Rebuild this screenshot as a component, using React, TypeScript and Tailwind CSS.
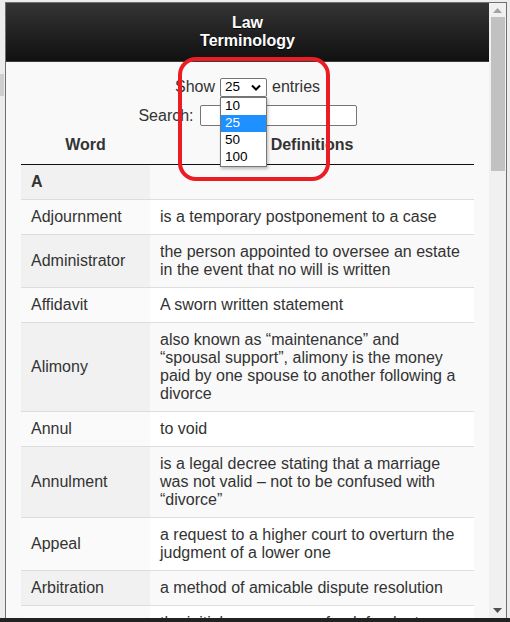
// Law terminology glossary: dark title bar, DataTables-style controls and a striped word list.
const terms: [string, string][] = [
  ["A", ""],
  ["Adjournment", "is a temporary postponement to a case"],
  ["Administrator", "the person appointed to oversee an estate in the event that no will is written"],
  ["Affidavit", "A sworn written statement"],
  [
    "Alimony",
    "also known as “maintenance” and “spousal support”, alimony is the money paid by one spouse to another following a divorce",
  ],
  ["Annul", "to void"],
  ["Annulment", "is a legal decree stating that a marriage was not valid – not to be confused with “divorce”"],
  ["Appeal", "a request to a higher court to overturn the judgment of a lower one"],
  ["Arbitration", "a method of amicable dispute resolution"],
  ["Arraignment", "the initial appearance of a defendant before a judge in a criminal case"],
];

export default function App() {
  return (
    <div
      className="relative flex h-[622px] w-[510px] flex-col overflow-hidden bg-[#ececec] text-[#333]"
      style={{ fontFamily: '"Liberation Sans", Arial, sans-serif' }}
    >
      <div className="flex min-h-0 flex-1 pt-[2px]">
        {/* left window edge */}
        <div className="flex w-[5px] flex-col">
          <div className="mt-[72px] h-[22px] w-[4px] bg-[#cfcfcf]" />
        </div>
        <div className="flex min-h-0 flex-1 border-l border-t border-r border-[#6f6f6f]">
          <main className="flex min-w-0 flex-1 flex-col overflow-hidden bg-[#f9f9f9]">
            <header className="border-b border-[#3a3a3a] bg-gradient-to-b from-[#353535] to-[#111] pt-[11px] pb-[11px] text-center text-[16px] font-bold leading-[18px] text-white [text-shadow:0_1px_0_#000]">
              Law
              <br />
              Terminology
            </header>

            <div className="px-[15px] pt-[15px]">
              <div className="flex h-[20px] items-center justify-center text-[16px]">
                <span>Show</span>
                <div className="relative mx-[5px]">
                  <div className="flex h-[19px] w-[47px] items-center justify-between rounded-[2px] border border-[#767676] bg-white pl-[4px] pr-[5px] text-[13.5px] text-black">
                    <span>25</span>
                    <svg width="10" height="7" viewBox="0 0 10 7">
                      <path d="M1 1.5 L5 5.5 L9 1.5" fill="none" stroke="#000" strokeWidth="2" />
                    </svg>
                  </div>
                  {/* open options list */}
                  <ul className="absolute left-0 top-[19px] z-10 w-[47px] border border-[#767676] bg-white text-[13.5px] text-black shadow-[1px_2px_3px_rgba(0,0,0,0.25)]">
                    {["10", "25", "50", "100"].map((o) => (
                      <li
                        key={o}
                        className={
                          o === "25"
                            ? "flex h-[17px] items-center bg-[#1e90ff] pl-[4px] text-white"
                            : "flex h-[17px] items-center pl-[4px]"
                        }
                      >
                        {o}
                      </li>
                    ))}
                  </ul>
                </div>
                <span>entries</span>
              </div>

              <div className="mt-[7px] flex h-[23px] items-center justify-center text-[16px]">
                <span>Search:</span>
                <div className="ml-[6px] h-[21px] w-[157px] rounded-[2px] border border-[#767676] bg-white" />
              </div>

              <table className="w-[453px] table-fixed border-collapse text-[16px] leading-[18px]">
                <colgroup>
                  <col className="w-[129px]" />
                  <col />
                </colgroup>
                <thead>
                  <tr className="border-b border-[#111]">
                    <th className="px-[10px] pt-[9px] pb-[10px] text-center font-bold">Word</th>
                    <th className="px-[10px] pt-[9px] pb-[10px] text-center font-bold">Definitions</th>
                  </tr>
                </thead>
                <tbody>
                  {terms.map(([word, def], i) => {
                    const odd = i % 2 === 0;
                    return (
                      <tr key={word} className={i > 0 ? "border-t border-[#ddd]" : ""}>
                        <td
                          className={
                            (odd ? "bg-[#f1f1f1] " : "bg-[#fafafa] ") +
                            (i === 0 ? "font-bold " : "") +
                            "px-[10px] py-[8px] align-middle"
                          }
                        >
                          {word}
                        </td>
                        <td className={(odd ? "bg-[#f9f9f9] " : "bg-white ") + "px-[10px] py-[8px] align-middle"}>
                          {def}
                        </td>
                      </tr>
                    );
                  })}
                </tbody>
              </table>
            </div>
          </main>

          {/* page scrollbar */}
          <div className="flex w-[17px] flex-col items-center bg-[#f0f0f0]">
            <div className="flex h-[14px] items-center justify-center">
              <svg width="9" height="5" viewBox="0 0 9 5">
                <path d="M0 5 L4.5 0 L9 5 Z" fill="#a3a3a3" />
              </svg>
            </div>
            <div className="h-[154px] w-[14px] bg-[#c1c1c1]" />
            <div className="flex-1" />
            <div className="flex h-[16px] items-center justify-center">
              <svg width="9" height="5" viewBox="0 0 9 5">
                <path d="M0 0 L9 0 L4.5 5 Z" fill="#505050" />
              </svg>
            </div>
          </div>
        </div>
        <div className="w-[3px]" />
      </div>
      <div className="h-[4px] bg-[#222]" />

      {/* red annotation box around the entries selector */}
      <div className="pointer-events-none absolute left-[178px] top-[57px] h-[124px] w-[152px] rounded-[18px] border-4 border-[#ec1c24]" />
    </div>
  );
}
